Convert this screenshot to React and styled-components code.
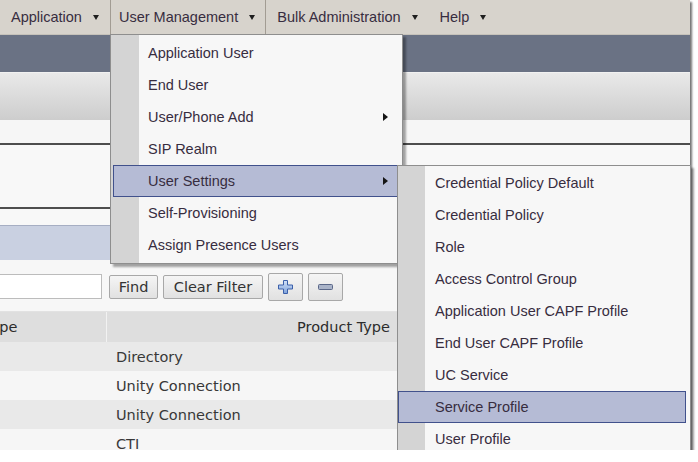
import React from 'react';
import styled, { createGlobalStyle } from 'styled-components';

const Global = createGlobalStyle`
  html, body { margin: 0; padding: 0; background: #ffffff; }
  body { font-family: "Liberation Sans", Arial, sans-serif; }
`;

const Frame = styled.div`
  position: relative;
  width: 690px;
  height: 450px;
`;

const Page = styled.div`
  width: 690px;
  height: 450px;
  overflow: hidden;
  background: #f7f7f7;
  box-shadow: 2px 2px 2px rgba(0, 0, 0, 0.55);
  display: flex;
  flex-direction: column;
`;

const MenuBar = styled.div`
  flex: none;
  height: 34px;
  display: flex;
  align-items: stretch;
  background: #d7d3cc;
  border-bottom: 1px solid #c6c2ba;
  font-size: 14.5px;
  color: #372d3f;
`;

const BarItem = styled.div`
  display: flex;
  align-items: center;
  gap: 11px;
  padding: ${p => (p.$open ? '0 10px 0 8px' : '0 10px')};
  border-left: 1px solid ${p => (p.$open ? '#a29c93' : 'transparent')};
  border-right: 1px solid ${p => (p.$open ? '#a29c93' : 'transparent')};
`;

const DownArrow = styled.span`
  width: 0;
  height: 0;
  margin-top: 1px;
  border-left: 3.5px solid transparent;
  border-right: 3.5px solid transparent;
  border-top: 5px solid #1e1e1e;
`;

const TitleBand = styled.div`
  flex: none;
  height: 37px;
  background: #6a7284;
`;

const ToolBand = styled.div`
  flex: none;
  height: 47px;
  border-top: 1px solid #f1f1f1;
  background: linear-gradient(#e9e9e9, #cdcdcd);
`;

const InfoBand = styled.div`
  flex: none;
  height: 23px;
  background: #f6f6f6;
`;

const Rule = styled.div`
  flex: none;
  height: 2px;
  background: #4e4e4e;
`;

const Panel = styled.div`
  flex: none;
  height: ${p => p.$h}px;
  background: #f8f8f8;
`;

const FilterBand = styled.div`
  flex: none;
  height: 34px;
  border-top: 1px solid #a6aec3;
  background: #c9d0e1;
`;

const SearchRow = styled.div`
  flex: none;
  height: 52px;
  box-sizing: border-box;
  padding-top: 12px;
  border-bottom: 1px solid #e2e2e2;
  display: flex;
  align-items: flex-start;
  gap: 4px;
`;

const Controls = styled.div`
  height: 29px;
  display: flex;
  align-items: center;
  gap: 5px;
`;

const SearchInput = styled.input`
  width: 102px;
  height: 25px;
  box-sizing: border-box;
  margin: 0 2px 0 0;
  background: #ffffff;
  border: 1px solid #bcbcbc;
  border-left: none;
  outline: none;
`;

const Button = styled.button`
  width: ${p => p.$w}px;
  height: ${p => (p.$icon ? 28 : 24)}px;
  box-sizing: border-box;
  padding: 0;
  display: flex;
  align-items: center;
  justify-content: center;
  font-family: "DejaVu Sans", Verdana, sans-serif;
  font-size: 14.5px;
  color: #333333;
  background: linear-gradient(#f5f5f5, #e1e1e1);
  border: 1px solid #a8a8a8;
  border-radius: 2px;
`;

const Table = styled.div`
  display: grid;
  grid-template-columns: 106px 291px 1fr;
  font-family: "DejaVu Sans", Verdana, sans-serif;
  font-size: 14.5px;
  color: #383838;
`;

const HeadCell = styled.div`
  height: 30px;
  display: flex;
  align-items: center;
  justify-content: ${p => (p.$right ? 'flex-end' : 'flex-start')};
  padding-right: ${p => (p.$right ? 7 : 0)}px;
  overflow: hidden;
  white-space: nowrap;
  background: #dedede;
  color: #2c2c2c;
  border-left: ${p => (p.$sep ? '1px solid #f2f2f2' : 'none')};
`;

const ClippedLabel = styled.span`
  margin-left: -16px;
`;

const Cell = styled.div`
  height: 29px;
  display: flex;
  align-items: center;
  padding-left: ${p => (p.$text ? 10 : 0)}px;
  background: ${p => (p.$odd ? '#f6f6f6' : '#e9e9e9')};
  white-space: nowrap;
`;

const Menu = styled.div`
  position: absolute;
  left: ${p => p.$x}px;
  top: ${p => p.$y}px;
  width: ${p => p.$w}px;
  z-index: ${p => p.$z};
  box-sizing: border-box;
  padding: ${p => p.$pad};
  display: flex;
  flex-direction: column;
  background: linear-gradient(to right, #d4d4d4 ${p => p.$gutter}px, #f7f7f7 ${p => p.$gutter}px);
  border: 1px solid #8e8e8e;
  box-shadow: 3px 3px 2px rgba(0, 0, 0, 0.35);
  font-size: 14.5px;
  color: #372d3f;
`;

const MenuItem = styled.div`
  height: 32px;
  box-sizing: border-box;
  display: flex;
  align-items: center;
  justify-content: space-between;
  padding: 0 10px 0 ${p => p.$indent}px;
  white-space: nowrap;
  border: 1px solid ${p => (p.$active ? '#41518c' : 'transparent')};
  background: ${p => (p.$active ? '#b5bbd5' : 'transparent')};
`;

const RightArrow = styled.span`
  width: 0;
  height: 0;
  border-top: 4px solid transparent;
  border-bottom: 4px solid transparent;
  border-left: 5px solid #151515;
`;

const PlusIcon = () => (
  <svg width="15" height="14" viewBox="0 0 15 14">
    <defs>
      <linearGradient id="pg" x1="0" y1="0" x2="0" y2="1">
        <stop offset="0" stopColor="#d3e2f8" />
        <stop offset="1" stopColor="#7fa2da" />
      </linearGradient>
    </defs>
    <path d="M5.5 0.5h4v4.5h5v4h-5v4.5h-4v-4.5h-5v-4h5z" fill="url(#pg)" stroke="#3c60aa" strokeWidth="1" />
  </svg>
);

const MinusIcon = () => (
  <svg width="15" height="6" viewBox="0 0 15 6">
    <rect x="0.5" y="0.5" width="14" height="5" rx="1" fill="#a9b3c8" stroke="#5a6788" strokeWidth="1" />
  </svg>
);

const barItems = [
  { label: 'Application' },
  { label: 'User Management', open: true },
  { label: 'Bulk Administration' },
  { label: 'Help' },
];

const userMenu = [
  { label: 'Application User' },
  { label: 'End User' },
  { label: 'User/Phone Add', sub: true },
  { label: 'SIP Realm' },
  { label: 'User Settings', sub: true, active: true },
  { label: 'Self-Provisioning' },
  { label: 'Assign Presence Users' },
];

const settingsMenu = [
  { label: 'Credential Policy Default' },
  { label: 'Credential Policy' },
  { label: 'Role' },
  { label: 'Access Control Group' },
  { label: 'Application User CAPF Profile' },
  { label: 'End User CAPF Profile' },
  { label: 'UC Service' },
  { label: 'Service Profile', active: true },
  { label: 'User Profile' },
];

const rows = ['Directory', 'Unity Connection', 'Unity Connection', 'CTI'];

export default function App() {
  return (
    <>
      <Global />
      <Frame>
        <Page>
          <MenuBar>
            {barItems.map(item => (
              <BarItem key={item.label} $open={item.open}>
                <span>{item.label}</span>
                <DownArrow />
              </BarItem>
            ))}
          </MenuBar>
          <TitleBand />
          <ToolBand />
          <InfoBand />
          <Rule />
          <Panel $h={62} />
          <Rule />
          <Panel $h={16} />
          <FilterBand />
          <SearchRow>
            <Controls>
              <SearchInput readOnly value="" />
              <Button $w={49}>Find</Button>
              <Button $w={100}>Clear Filter</Button>
              <Button $w={35} $icon>
                <PlusIcon />
              </Button>
              <Button $w={35} $icon>
                <MinusIcon />
              </Button>
            </Controls>
          </SearchRow>
          <Table>
            <HeadCell>
              <ClippedLabel>Type</ClippedLabel>
            </HeadCell>
            <HeadCell $right $sep>
              Product Type
            </HeadCell>
            <HeadCell />
            {rows.map((r, i) => (
              <React.Fragment key={i}>
                <Cell $odd={i % 2 === 1} />
                <Cell $odd={i % 2 === 1} $text>
                  {r}
                </Cell>
                <Cell $odd={i % 2 === 1} />
              </React.Fragment>
            ))}
          </Table>
        </Page>

        <Menu $x={110} $y={34} $w={293} $z={2} $gutter={28} $pad="2px 3px 2px 2px">
          {userMenu.map(item => (
            <MenuItem key={item.label} $indent={34} $active={item.active}>
              <span>{item.label}</span>
              {item.sub && <RightArrow />}
            </MenuItem>
          ))}
        </Menu>

        <Menu $x={397} $y={165} $w={294} $z={3} $gutter={27} $pad="1px 4px 0 0">
          {settingsMenu.map(item => (
            <MenuItem key={item.label} $indent={36} $active={item.active}>
              <span>{item.label}</span>
            </MenuItem>
          ))}
        </Menu>
      </Frame>
    </>
  );
}
